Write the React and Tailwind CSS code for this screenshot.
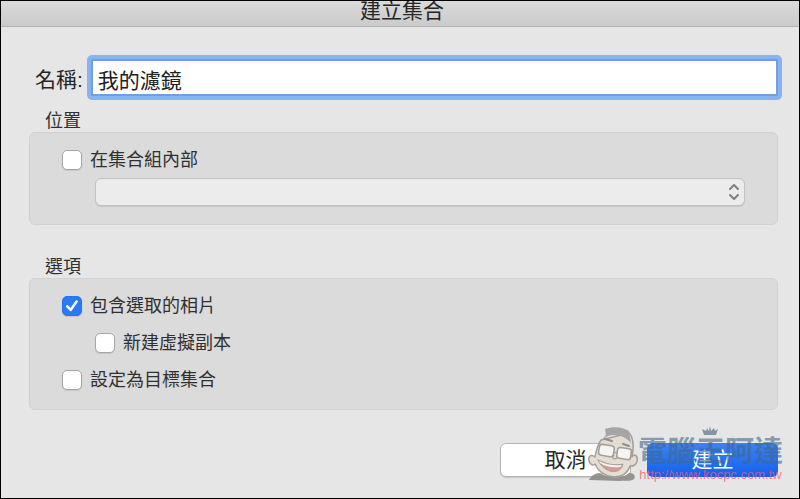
import React, { useState } from "react";

function Check({ id, label, defaultChecked = false, nested = false }) {
  return (
    <div className={`flex h-5 items-center gap-2 ${nested ? "pl-[33px]" : ""}`}>
      <span className="relative flex h-5 w-5 shrink-0">
        <input
          id={id}
          type="checkbox"
          defaultChecked={defaultChecked}
          className="peer h-5 w-5 appearance-none rounded-[5px] border border-[#a6a6a6] bg-white shadow-[0_1px_1px_rgba(0,0,0,0.1)] checked:border-[#2474f2] checked:bg-[#2a7af6]"
        />
        <svg viewBox="0 0 20 20" className="pointer-events-none absolute inset-0 hidden h-5 w-5 peer-checked:block" fill="none" stroke="white" strokeWidth="2.5" strokeLinecap="round" strokeLinejoin="round">
          <path d="M5.3 10.4 L8.6 14 L14.6 5.6" />
        </svg>
      </span>
      <label htmlFor={id} className="text-lg leading-5">{label}</label>
    </div>
  );
}

function Mascot() {
  return (
    <svg viewBox="0 0 56 56" className="-mr-1 h-14 w-14 shrink-0 opacity-90" fill="none" strokeLinecap="round" strokeLinejoin="round">
      <path d="M3 54 C5 50 9 47 14 47 C24 53 36 53 43 47 C48 47 50 50 48 53 C44 56 38 54 34 55 Z" fill="#8b8b89" />
      <path d="M15 14 C11 20 10 25 9 31 C4 27 1 32 4 37 C6 40 8 39 9 38 C12 45 18 50 28 51 C37 51 42 46 44 40 C50 41 52 35 51 31 C49 28 47 29 46 31 C48 20 47 11 43 7 Z" fill="#e3dbd0" stroke="#9b9792" strokeWidth="1.5" />
      <path d="M14 16 L20 9 L19 3 C27 0 37 1 43 5 L45 17 C38 9 28 7 20 11 Z" fill="#a09f9d" />
      <path d="M19 13 L26 15 M37 18 L43 20" stroke="#8b8580" strokeWidth="2" />
      <rect x="13" y="19" width="15" height="11" rx="3" transform="rotate(9 20 24)" fill="#f3f3f2" stroke="#98948f" strokeWidth="1.5" />
      <rect x="31" y="22" width="14" height="11" rx="3" transform="rotate(9 38 28)" fill="#f3f3f2" stroke="#98948f" strokeWidth="1.5" />
      <path d="M28 26 L31 27 M28 29 C25 32 28 34 31 32" stroke="#98948f" strokeWidth="1.3" />
      <path d="M12 34 C20 38 29 40 37 38 C36 44 30 47 24 45 C18 43 14 39 12 34 Z" fill="#d59089" stroke="#98948f" strokeWidth="1" />
      <path d="M13 35 C20 39 29 40 36 39 L34 41 C27 42 20 41 14 37 Z" fill="#f7f5f2" />
    </svg>
  );
}

function Watermark() {
  return (
    <div aria-hidden="true" className="pointer-events-none absolute right-4 bottom-4 flex items-end">
      <Mascot />
      <div className="flex flex-col items-center">
        <svg viewBox="0 0 18 10" className="h-[10px] w-[18px]" fill="#8394a2">
          <path d="M3 9 L1 3 L5 5 L6 2 L8 5 L9 0 L10 5 L13 2 L14 5 L17 3 L15 9 Z" />
        </svg>
        <span className="text-[29px] leading-[32px] font-bold text-[#41678d]/60">電腦王阿達</span>
        <span className="text-[13px] leading-[14px] text-[#f25a70]/75">http://www.kocpc.com.tw</span>
      </div>
    </div>
  );
}

export default function App() {
  const [name, setName] = useState("我的濾鏡");
  return (
    <main className="relative min-h-screen border border-black bg-[#e6e6e6] font-['Liberation_Sans','Noto_Sans_CJK_TC',sans-serif] text-[#303030]">
      <header className="flex h-[26px] justify-center overflow-hidden border-b border-[#b4b4b4] bg-linear-to-b from-[#dadada] to-[#cbcbcb] pl-1">
        <h1 className="text-[21px] leading-5 text-[#262626]">建立集合</h1>
      </header>
      <form onSubmit={(e) => e.preventDefault()} className="flex flex-col pr-[21px] pl-7">
        <div className="mt-7 -mr-1 flex items-center gap-1 pl-1.5">
          <label htmlFor="name" className="shrink-0 pt-1 text-[21px] leading-8 text-[#262626]">名稱:</label>
          <div className="flex min-w-0 flex-1 rounded-[5px] bg-[#88b3f2] p-1">
            <input
              id="name"
              value={name}
              onChange={(e) => setName(e.target.value)}
              className="h-[37px] min-w-0 flex-1 border-2 border-[#709fdf] bg-white px-[5px] pt-0.5 text-[21px] text-[#202020] outline-none"
            />
          </div>
        </div>
        <fieldset className="mt-2.5 min-w-0">
          <legend className="px-4 text-lg leading-[22px]">位置</legend>
          <div className="flex h-[93px] flex-col gap-2 rounded-md border border-[#d2d2d2] bg-[#dbdbdb] pt-[17px] pr-8 pl-8">
            <Check id="inside" label="在集合組內部" />
            <div className="relative ml-[33px] flex">
              <select aria-label="集合組" className="h-7 w-full appearance-none rounded-md border border-[#c2c2c2] bg-[#ececec] shadow-[0_1px_1px_rgba(0,0,0,0.1)]">
                <option></option>
              </select>
              <svg viewBox="0 0 12 18" className="pointer-events-none absolute top-[5px] right-[5px] h-[18px] w-3" fill="none" stroke="#808080" strokeWidth="2" strokeLinecap="round" strokeLinejoin="round">
                <path d="M2 6 L6 2 L10 6 M2 12 L6 16 L10 12" />
              </svg>
            </div>
          </div>
        </fieldset>
        <fieldset className="mt-[31px] min-w-0">
          <legend className="px-4 text-lg leading-[22px]">選項</legend>
          <div className="flex h-[132px] flex-col gap-[17px] rounded-md border border-[#d2d2d2] bg-[#dbdbdb] pt-[17px] pr-8 pl-8">
            <Check id="include" label="包含選取的相片" defaultChecked />
            <Check id="virtual" label="新建虛擬副本" nested />
            <Check id="target" label="設定為目標集合" />
          </div>
        </fieldset>
        <div className="mt-[33px] flex justify-end gap-4">
          <button type="button" className="h-[34px] w-[131px] rounded-md border border-[#b5b5b5] bg-white text-[21px] leading-8 text-[#262626] shadow-[0_1px_1px_rgba(0,0,0,0.15)]">取消</button>
          <button type="submit" className="h-[34px] w-[131px] rounded-md bg-linear-to-b from-[#3c82ef] to-[#1060ef] text-[21px] leading-8 text-white">建立</button>
        </div>
      </form>
      <Watermark />
    </main>
  );
}
